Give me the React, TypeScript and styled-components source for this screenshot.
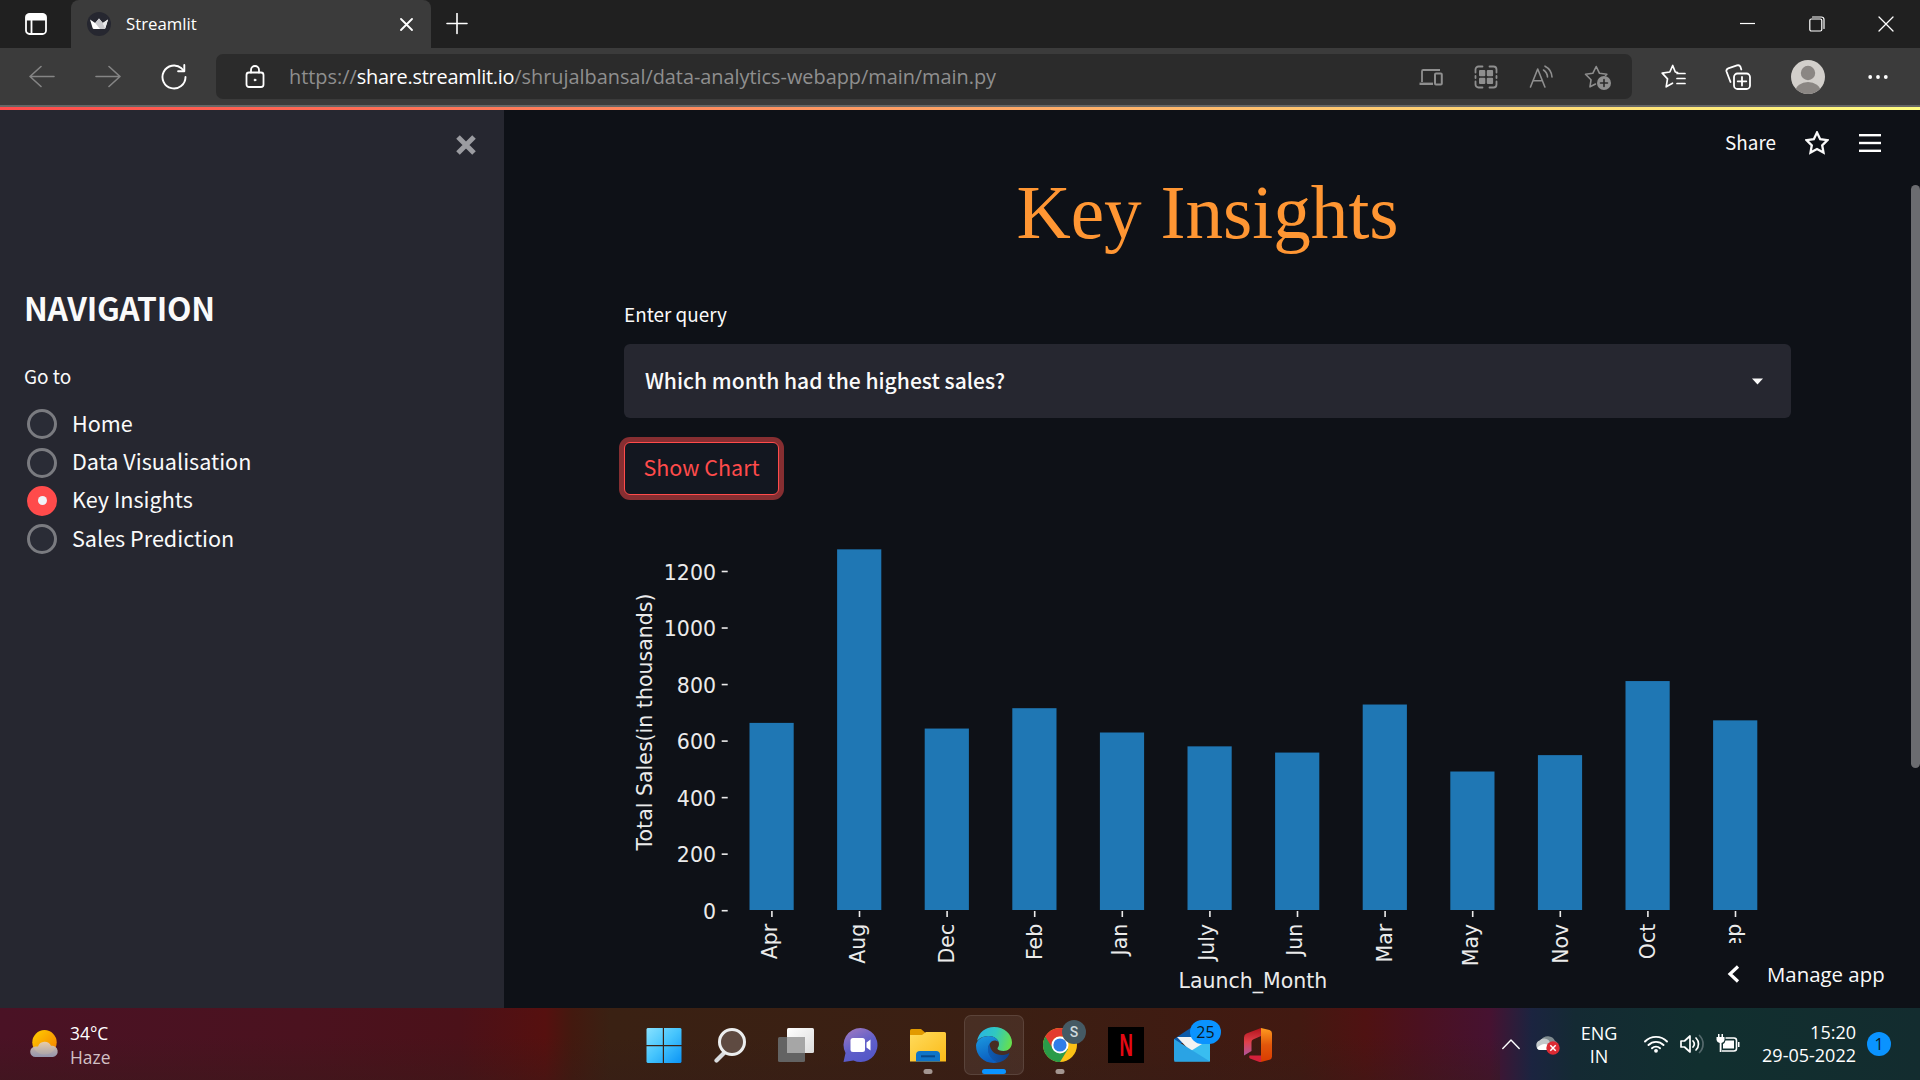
import React from "react";
import styled, { createGlobalStyle } from "styled-components";

const source = `"Noto Sans CJK SC", "Open Sans", sans-serif`;
const segoe = `"Open Sans", "Noto Sans", sans-serif`;

const GlobalStyle = createGlobalStyle`
  * { box-sizing: border-box; }
  html, body { margin: 0; padding: 0; background: #0e1117; overflow: hidden; }
  svg { display: block; flex: none; }
`;

const Screen = styled.div`
  width: 1920px;
  height: 1080px;
  display: flex;
  flex-direction: column;
  overflow: hidden;
  color: #fafafa;
  font-family: ${source};
`;

/* ---------- browser chrome ---------- */

const TabStrip = styled.div`
  height: 48px;
  flex: none;
  display: flex;
  align-items: center;
  padding-right: 26px;
  background: #202020;
  color: #fff;
`;

const TabMenu = styled.div`
  width: 71px;
  padding-left: 25px;
`;

const Tab = styled.div`
  width: 360px;
  height: 48px;
  display: flex;
  align-items: center;
  padding: 0 18px 0 16px;
  background: #3b3b3b;
  border-radius: 8px 8px 0 0;
`;

const Favicon = styled.div`
  width: 24px;
  height: 24px;
  border-radius: 50%;
  background: #262730;
`;

const TabTitle = styled.div`
  flex: 1;
  margin-left: 15px;
  font: 16.8px/24px ${segoe};
  padding-bottom: 1px;
`;

const NewTab = styled.div`
  margin-left: 15px;
`;

const WindowButtons = styled.div`
  margin-left: auto;
  display: flex;
  align-items: center;
  gap: 53px;
`;

const Toolbar = styled.div`
  height: 59px;
  flex: none;
  display: flex;
  align-items: center;
  background: #3b3b3b;
  border-bottom: 2px solid #666;
  padding: 0 32px 0 29px;
`;

const HistoryButtons = styled.div`
  width: 187px;
  display: flex;
  align-items: center;
  gap: 40px;
`;

const AddressBar = styled.div`
  width: 1416px;
  height: 45px;
  display: flex;
  align-items: center;
  padding: 0 21px 0 29px;
  border-radius: 7px;
  background: #2b2b2b;
`;

const Url = styled.div`
  flex: 1;
  margin-left: 24px;
  white-space: nowrap;
  font: 19.9px/28px ${segoe};
  letter-spacing: -0.02px;
  color: #8f8f8f;
`;

const Host = styled.span`
  color: #fff;
  letter-spacing: -0.24px;
`;

const AddressActions = styled.div`
  display: flex;
  align-items: center;
  gap: 31px;
  color: #8f8f8f;
`;

const ToolbarActions = styled.div`
  flex: 1;
  display: flex;
  align-items: center;
  justify-content: space-between;
  padding-left: 29px;
  color: #fff;
`;

const Avatar = styled.div`
  width: 34px;
  height: 34px;
  margin: 0 4px 0 2px;
  border-radius: 50%;
  overflow: hidden;
  background: #d2cfcb;
`;

const Decoration = styled.div`
  height: 3px;
  flex: none;
  background: linear-gradient(90deg, #ff4b4b, #fffd80);
`;

/* ---------- app ---------- */

const Page = styled.div`
  position: relative;
  height: 898px;
  flex: none;
  display: flex;
  background: #0e1117;
  overflow: hidden;
`;

const Sidebar = styled.aside`
  width: 504px;
  flex: none;
  display: flex;
  flex-direction: column;
  padding: 0 27px 0 24px;
  background: #262730;
`;

const SidebarTop = styled.div`
  height: 69px;
  display: flex;
  align-items: center;
  justify-content: flex-end;
`;

const SidebarHeading = styled.h2`
  margin: 108px 0 0;
  font-size: 31.8px;
  font-weight: 700;
  line-height: 40px;
  letter-spacing: -0.2px;
`;

const SidebarLabel = styled.div`
  margin-top: 35px;
  font-size: 19px;
  line-height: 28px;
`;

const RadioGroup = styled.div`
  margin-top: 15px;
  padding-left: 3px;
`;

const RadioRow = styled.label`
  height: 38.4px;
  display: flex;
  align-items: center;
  gap: 15px;
`;

const RadioMark = styled.span<{ $on?: boolean }>`
  width: 30px;
  height: 30px;
  display: grid;
  place-items: center;
  border-radius: 50%;
  border: 3px solid ${(p) => (p.$on ? "#ff4b4b" : "#7a7b80")};
  background: ${(p) => (p.$on ? "#ff4b4b" : "#2a2c36")};

  &::after {
    content: "";
    width: 9px;
    height: 9px;
    border-radius: 50%;
    background: ${(p) => (p.$on ? "#f0f2f6" : "transparent")};
  }
`;

const RadioText = styled.span`
  font-size: 21.6px;
  line-height: 30px;
  padding-bottom: 3px;
`;

const Main = styled.main`
  width: 1416px;
  display: flex;
  flex-direction: column;
`;

const Header = styled.header`
  height: 65px;
  flex: none;
  display: flex;
  align-items: center;
  justify-content: flex-end;
  padding-right: 39px;
`;

const ShareLink = styled.span`
  font-size: 18.9px;
  line-height: 28px;
  padding-bottom: 2px;
  margin-right: 29px;
`;

const HeaderStar = styled.span`
  margin-right: 30px;
`;

const Block = styled.section`
  display: flex;
  flex-direction: column;
  align-items: flex-start;
  padding: 0 129px 0 120px;
`;

const Title = styled.h1`
  align-self: stretch;
  margin: 0;
  text-align: center;
  color: #ff9633;
  font: 400 75.2px/76px "Liberation Serif", serif;
`;

const FieldLabel = styled.div`
  margin-top: 49px;
  font-size: 18.9px;
  line-height: 28px;
`;

const Select = styled.div`
  align-self: stretch;
  height: 74px;
  margin-top: 16px;
  display: flex;
  align-items: center;
  justify-content: space-between;
  padding: 0 28px 0 21px;
  border-radius: 6px;
  background: #262730;
  font-size: 21.1px;
  font-weight: 500;
`;

const SelectText = styled.span`
  line-height: 30px;
  padding-bottom: 3px;
`;

const Button = styled.button`
  width: 155px;
  height: 53px;
  margin: 24px 0 25px;
  padding: 0 0 4px;
  border: 1.5px solid #ff4b4b;
  border-radius: 6px;
  background: #131720;
  box-shadow: 0 0 0 5px #862e31;
  color: #ff4b4b;
  font: 21.5px/30px ${source};
`;

const ManageApp = styled.div`
  position: absolute;
  right: 9px;
  bottom: 0;
  width: 203px;
  height: 65.5px;
  display: flex;
  align-items: center;
  padding: 0 0 2px 19px;
  gap: 27px;
  background: #0e1117;
  font: 20.4px/28px ${segoe};
`;

const Scrollbar = styled.div`
  position: absolute;
  right: 0;
  top: 75px;
  width: 9px;
  height: 583px;
  border-radius: 4.5px;
  background: #6b6c70;
`;

/* ---------- taskbar ---------- */

const Taskbar = styled.div`
  height: 72px;
  flex: none;
  display: grid;
  grid-template-columns: 631px 660px 1fr;
  background:
    linear-gradient(180deg, transparent 40%, rgba(52, 28, 24, 0.35)) 0 0 / 1500px 100% no-repeat,
    linear-gradient(90deg, #4a1225 0, #4b121f 300px, #4b1119 460px, #56100f 545px, #43190f 572px,
      #3a2113 610px, #3b1f13 1000px, #421911 1300px, #4f1212 1365px, #4b1120 1420px,
      #461231 1490px, #1b2440 1532px, #142a33 1575px, #112f2f 1700px, #132c2f 1920px);
  font-family: ${segoe};
  color: #fff;
`;

const Weather = styled.div`
  display: flex;
  align-items: center;
  gap: 11px;
  padding-left: 30px;
`;

const WeatherText = styled.div`
  font-size: 17.4px;
  line-height: 24px;
  padding-top: 2px;
`;

const Muted = styled.div`
  color: #d3c0c5;
`;

const Apps = styled.div`
  display: grid;
  grid-template-columns: repeat(10, 66px);
  padding-top: 2px;
`;

const AppSlot = styled.div`
  position: relative;
  display: grid;
  place-items: center;
`;

const AppTile = styled.div<{ $active?: boolean }>`
  width: 60px;
  height: 60px;
  display: grid;
  place-items: center;
  border-radius: 7px;
  border: 1px solid ${(p) => (p.$active ? "rgba(255,255,255,.1)" : "transparent")};
  background: ${(p) => (p.$active ? "rgba(255,255,255,.07)" : "none")};
`;

const Running = styled.div<{ $wide?: boolean }>`
  position: absolute;
  bottom: 6px;
  left: 50%;
  transform: translateX(-50%);
  width: ${(p) => (p.$wide ? 24 : 9)}px;
  height: 5px;
  border-radius: 3px;
  background: ${(p) => (p.$wide ? "#0a93ff" : "#a39691")};
`;

const ProfileBadge = styled.div`
  position: absolute;
  top: 10px;
  left: 35px;
  width: 24px;
  height: 24px;
  border-radius: 50%;
  background: #455a64;
  color: #cfd8dc;
  text-align: center;
  font: 500 14px/24px Roboto, sans-serif;
`;

const CountBadge = styled.div`
  position: absolute;
  top: 10px;
  left: 31px;
  width: 31px;
  height: 24px;
  border-radius: 12px;
  background: #0a93ff;
  color: #0b1a26;
  text-align: center;
  font: 16px/24px ${segoe};
`;

const NetflixTile = styled.div`
  width: 36px;
  height: 36px;
  background: #000;
  color: #e50914;
  text-align: center;
  font: 700 31px/37px "Liberation Sans", sans-serif;
`;

const NetflixMark = styled.span`
  display: inline-block;
  transform: scaleX(0.6);
`;

const Tray = styled.div`
  display: flex;
  align-items: center;
  justify-content: flex-end;
  padding-right: 29px;
`;

const TrayItem = styled.div<{ $gap: number }>`
  margin-left: ${(p) => p.$gap}px;
`;

const Language = styled.div`
  width: 40px;
  margin-left: 19px;
  padding-top: 2px;
  text-align: center;
  font-size: 18px;
  line-height: 23px;
`;

const Clock = styled.div`
  width: 100px;
  margin: 0 11px 0 15px;
  text-align: right;
  font-size: 18px;
  line-height: 23px;
`;

const Notice = styled.div`
  width: 24px;
  height: 24px;
  border-radius: 50%;
  background: #0a93ff;
  color: #0b1a26;
  text-align: center;
  font-size: 16px;
  line-height: 24px;
`;

/* ---------- data ---------- */

const navigation = ["Home", "Data Visualisation", "Key Insights", "Sales Prediction"];

const months: [string, number][] = [
  ["Apr", 663], ["Aug", 1277], ["Dec", 643], ["Feb", 715], ["Jan", 629], ["July", 580],
  ["Jun", 558], ["Mar", 728], ["May", 491], ["Nov", 549], ["Oct", 811], ["Sep", 672],
];
const ticks = [0, 200, 400, 600, 800, 1000, 1200];

const BASE = 910.3;
const SCALE = 339.2 / 1200;

/* Rotated labels are centred on their ink, so a descender moves the baseline. */
const baselineShift = (name: string) => (/^J/.test(name) ? 26.8 : /[gpy]/.test(name) ? 27.8 : 29.6);

function Chart() {
  return (
    <svg width="1167" height="488" viewBox="624 520 1167 488" fontFamily='"DejaVu Sans", sans-serif' fontSize="20.5" fill="#ebebeb">
      {ticks.map((t) => {
        const y = BASE + 0.4 - t * SCALE;
        return (
          <g key={t}>
            <text x="716" y={y + 8} textAnchor="end">{t}</text>
            <rect x="721.7" y={y - 0.8} width="6" height="1.6" />
          </g>
        );
      })}
      {months.map(([name, value], i) => {
        const x = 749.5 + i * 87.6;
        const top = BASE - value * SCALE;
        return (
          <g key={name}>
            <rect x={x} y={top} width="44.2" height={BASE - 0.3 - top} fill="#1f77b4" />
            <rect x={x + 21.6} y="911" width="1.6" height="6" />
            <text transform={`translate(${x + baselineShift(name)} 923.8) rotate(-90)`} textAnchor="end">{name}</text>
          </g>
        );
      })}
      <text transform="translate(652 722) rotate(-90)" textAnchor="middle" textLength="257">Total Sales(in thousands)</text>
      <text x="1252.9" y="987.5" textAnchor="middle">Launch_Month</text>
    </svg>
  );
}

/* ---------- icons ---------- */

const line = { fill: "none", stroke: "currentColor", strokeWidth: 1.8, strokeLinecap: "round", strokeLinejoin: "round" } as const;

const TabsIcon = () => (
  <svg width="22" height="22" viewBox="0 0 22 22" {...line}>
    <rect x="1" y="1" width="20" height="20" rx="3.5" />
    <path d="M1.5 2.5h19v4h-19z" fill="currentColor" />
    <path d="M6.5 7v13.5" />
  </svg>
);
const Crown = () => (
  <svg width="24" height="24" viewBox="0 0 24 24">
    <path d="M3 7.5 8.2 11 12 6.5 15.8 11 21 7.5 18.3 16.2q-.3.8-1.2.8H6.9q-.9 0-1.2-.8z" fill="#fff" />
    <path d="M12 6.5 8.2 11 13 17h4.1q.9 0 1.2-.8L15.8 11z" fill="#c9c9cd" />
    <path d="M21 7.5 15.8 11l2.5 5.2z" fill="#e8e8ea" />
  </svg>
);
const Cross = ({ size, w = 1.5 }: { size: number; w?: number }) => (
  <svg width={size} height={size} viewBox={`0 0 ${size} ${size}`} {...line} strokeWidth={w}>
    <path d={`M1 1 ${size - 1} ${size - 1}M${size - 1} 1 1 ${size - 1}`} />
  </svg>
);
const Plus = () => (
  <svg width="22" height="22" viewBox="0 0 22 22" {...line} strokeWidth="1.6"><path d="M11 .5v20M1 10.5h20" /></svg>
);
const Minimise = () => (
  <svg width="16" height="16" viewBox="0 0 16 16"><path d="M0 7.5h15" stroke="#fff" strokeWidth="1.2" /></svg>
);
const Restore = () => (
  <svg width="16" height="16" viewBox="0 0 16 16" {...line} strokeWidth="1.2">
    <rect x=".8" y="3" width="12" height="12" rx="1.5" />
    <path d="M3.500 1h9a2.500 2.500 0 0 1 2.500 2.500v9" />
  </svg>
);
const Arrow = ({ flip }: { flip?: boolean }) => (
  <svg width="26" height="24" viewBox="0 0 26 24" {...line} stroke="#858585" strokeWidth="1.6">
    <path d={flip ? "M1 11.500h24M14 1.500l11 10-11 10" : "M25 11.500H1M12 1.500 1 11.500l11 10"} />
  </svg>
);
const Reload = () => (
  <svg width="26" height="26" viewBox="0 0 26 26" {...line} stroke="#fff" strokeWidth="1.900">
    <path d="M24.500 13A11.500 11.500 0 1 1 20.500 4.300L23 6.800" />
    <path d="M23.300 1v6.200h-6.200" />
  </svg>
);
const Lock = () => (
  <svg width="20" height="24" viewBox="0 0 20 24" {...line} stroke="#fff">
    <rect x="1.500" y="7.500" width="17" height="14.500" rx="2.500" />
    <path d="M6 7.500V5a4 4 0 0 1 8 0v2.500" />
    <circle cx="10" cy="15" r=".9" fill="#fff" strokeWidth="1" />
  </svg>
);
const Devices = () => (
  <svg width="24" height="18" viewBox="0 0 24 18" {...line} strokeLinecap="butt">
    <path d="M3 14V3.200Q3 2 4.200 2H21" /><path d="M.5 15.800H14" strokeWidth="2.400" />
    <rect x="16" y="5.500" width="6.800" height="11" rx="1" strokeWidth="2" />
  </svg>
);
const QrIcon = () => (
  <svg width="24" height="24" viewBox="0 0 24 24" {...line}>
    <path d="M1.500 7.500V4.500a3 3 0 0 1 3-3h4M15.500 1.500h4a3 3 0 0 1 3 3v3M22.500 16.500v3a3 3 0 0 1-3 3h-4M8.500 22.500h-4a3 3 0 0 1-3-3v-3M1.500 11v2M22.500 11v2" />
    <g fill="currentColor" stroke="none">
      <rect x="5" y="5" width="6.300" height="6.300" rx="1" /><rect x="12.800" y="5" width="6.300" height="6.300" rx="1" />
      <rect x="5" y="12.800" width="6.300" height="6.300" rx="1" /><rect x="12.800" y="12.800" width="6.300" height="6.300" rx="1" />
    </g>
  </svg>
);
const ReadAloud = () => (
  <svg width="24" height="24" viewBox="0 0 24 24" {...line} strokeWidth="1.6">
    <path d="m1.500 22 7.200-18 7.200 18M4.200 15.800h9" />
    <path d="M14.500 5a9 9 0 0 1 4 7M16 1.200A13 13 0 0 1 23 12" />
  </svg>
);
const starPath = "M12 1.500l3.200 6.700 7.300 1-5.300 5.100 1.300 7.300L12 18.100l-6.500 3.500 1.300-7.300L1.500 9.200l7.300-1z";
const StarAdd = () => (
  <svg width="27" height="26" viewBox="0 0 27 26" {...line} strokeWidth="1.6">
    <path d="M11.500 20 6 22.800 7 15.800 1.500 10.300l7.300-1L12.200 2.500l3.300 6.800 7.300 1-1.300 1.200" />
    <circle cx="20" cy="19" r="7" fill="currentColor" stroke="none" />
    <path d="M20 15.500v7M16.500 19h7" stroke="#2b2b2b" />
  </svg>
);
const Favorites = () => (
  <svg width="25" height="25" viewBox="0 0 25 25" {...line} strokeWidth="1.700">
    <path d="M16.500 8.500 14.300 8 11.700 1.500 8.800 8 1.200 9.200l5.300 5.600-1.300 8 6.300-3.600M16 9.500h8M16 14.500h8M16 19.500h8" />
  </svg>
);
const Collections = () => (
  <svg width="26" height="26" viewBox="0 0 26 26" {...line} strokeWidth="1.800">
    <rect x="9" y="9.500" width="16" height="15.500" rx="3.500" />
    <path d="M17 13v8.500M12.700 17.300h8.600M5.500 18 1.500 7.500Q.9 5.200 3.200 4.300L12 1.400q2.500-.7 3.500 1.500l.8 2.600" />
  </svg>
);
const Person = () => (
  <svg width="34" height="34" viewBox="0 0 34 34"><circle cx="17" cy="13" r="7.200" fill="#8a8683" /><ellipse cx="17" cy="31" rx="12.500" ry="9" fill="#8a8683" /></svg>
);
const Dots = () => (
  <svg width="20" height="6" viewBox="0 0 20 6" fill="#fff"><circle cx="2.200" cy="3" r="1.900" /><circle cx="10" cy="3" r="1.900" /><circle cx="17.800" cy="3" r="1.900" /></svg>
);
const BigStar = () => (
  <svg width="24" height="24" viewBox="0 0 24 24" {...line} strokeWidth="2.300" strokeLinejoin="miter"><path d={starPath} /></svg>
);
const Burger = () => (
  <svg width="22" height="20" viewBox="0 0 22 20" fill="#fff"><rect y="1" width="22" height="2.400" /><rect y="8.800" width="22" height="2.400" /><rect y="16.600" width="22" height="2.400" /></svg>
);
const Caret = () => (
  <svg width="11" height="7" viewBox="0 0 11 7"><path d="M0 .5h11L5.500 6.500z" fill="#fafafa" /></svg>
);
const CloseSidebar = () => (
  <svg width="22" height="22" viewBox="0 0 22 22"><path d="M3 3 19 19M19 3 3 19" stroke="#9b9ca1" strokeWidth="5" /></svg>
);
const ChevronLeft = () => (
  <svg width="13" height="18" viewBox="0 0 13 18"><path d="M11 1.500 3 9l8 7.500" fill="none" stroke="#fff" strokeWidth="3.200" /></svg>
);

const Sun = () => (
  <svg width="29" height="28" viewBox="0 0 29 28">
    <defs>
      <linearGradient id="sun" x1="0" y1="0" x2="1" y2="1"><stop stopColor="#ffcf00" /><stop offset="1" stopColor="#f57c00" /></linearGradient>
      <linearGradient id="haze" x1="0" y1="0" x2="0" y2="1"><stop stopColor="#e6cfb5" /><stop offset="1" stopColor="#9a9fb8" /></linearGradient>
    </defs>
    <circle cx="14.500" cy="12.300" r="12.200" fill="url(#sun)" />
    <path d="M5.500 27a5.300 5.300 0 0 1 0-10.600l2.500.2a7 7 0 0 1 13-.8 5.600 5.600 0 1 1 2 11.200z" fill="url(#haze)" opacity=".93" />
  </svg>
);
const Windows = () => (
  <svg width="37" height="36" viewBox="0 0 37 36">
    <defs><linearGradient id="win" gradientUnits="userSpaceOnUse" x1="0" y1="0" x2="36" y2="36"><stop stopColor="#8be3ff" /><stop offset=".5" stopColor="#45c4fd" /><stop offset="1" stopColor="#0a93f5" /></linearGradient></defs>
    <path d="M1.500 1h15.300v17H.5V2zM18 1h16.500l1 1v16H18zM.5 19.200h16.300V36H1.500l-1-1zM18 19.200h17.500V35l-1 1H18z" fill="url(#win)" />
  </svg>
);
const Search = () => (
  <svg width="34" height="36" viewBox="0 0 34 36">
    <path d="M12 25 3.500 33.500" stroke="#d9dcdf" strokeWidth="4.200" strokeLinecap="round" />
    <circle cx="19" cy="15" r="12.500" fill="#5e4a41" stroke="#eceeef" strokeWidth="3" />
  </svg>
);
const TaskView = () => (
  <svg width="36" height="36" viewBox="0 0 36 36">
    <defs><linearGradient id="tv" x1="0" y1="0" x2="1" y2="1"><stop stopColor="#fff" /><stop offset="1" stopColor="#dcdcdc" /></linearGradient></defs>
    <rect x="9" y="1" width="27" height="25" rx="1.500" fill="url(#tv)" />
    <rect y="10" width="27" height="25" rx="1.500" fill="#636363" />
    <path d="M9 10h18v16H9z" fill="#a6a6a6" />
  </svg>
);
const Chat = () => (
  <svg width="38" height="36" viewBox="1 0 38 36">
    <defs><linearGradient id="chat" x1="0" y1="0" x2=".5" y2="1"><stop stopColor="#a67cc0" /><stop offset=".6" stopColor="#605fc9" /><stop offset="1" stopColor="#5558c8" /></linearGradient></defs>
    <path d="M18.500 1a17 17 0 1 1-7 32.500L1.500 35l2-9A17 17 0 0 1 18.500 1z" fill="url(#chat)" />
    <rect x="8.500" y="11" width="14.500" height="14" rx="2.500" fill="#fff" />
    <path d="M24.500 15.500 28.500 12.500v11l-4-3z" fill="#fff" />
  </svg>
);
const Folder = () => (
  <svg width="36" height="36" viewBox="0 0 36 36">
    <defs><linearGradient id="fold" x1="0" y1="0" x2="1" y2="1"><stop stopColor="#ffdb5c" /><stop offset="1" stopColor="#fbbb18" /></linearGradient></defs>
    <path d="M0 3.500Q0 2 1.500 2H11l4 3.500V10H0z" fill="#e29a00" />
    <path d="M0 8h12l4-3h18.500Q36 5 36 6.500V34.500H0z" fill="url(#fold)" />
    <path d="M6 34.500V28q0-4 4-4h16q4 0 4 4v6.500z" fill="#0f74c8" />
    <path d="M11 29.300h14" stroke="#08488a" strokeWidth="2" />
  </svg>
);
const Edge = () => (
  <svg width="36" height="36" viewBox="0 0 36 36">
    <defs>
      <linearGradient id="e1" x1="0" y1=".3" x2="1" y2=".5"><stop stopColor="#28b4e6" /><stop offset=".5" stopColor="#30c8c0" /><stop offset="1" stopColor="#66e04e" /></linearGradient>
      <linearGradient id="e2" x1="0" y1="0" x2=".3" y2="1"><stop stopColor="#1b9ae0" /><stop offset="1" stopColor="#0b5fc0" /></linearGradient>
      <linearGradient id="e3" x1="0" y1="0" x2="1" y2="0"><stop stopColor="#0e5cb4" /><stop offset="1" stopColor="#0f3f88" /></linearGradient>
    </defs>
    <path d="M1 14C2.500 5.500 9.500 0 18 0c10.500 0 18 7.500 18 15.500 0 5-4 8.500-8.500 8.500-3.500 0-6-1-6-2.500 0-1 1.500-1.800 1.500-4.500C23 12.500 18 9 12.500 9 7 9 3 11.500 1 14z" fill="url(#e1)" />
    <path d="M0 18.500C.5 13 6 9 12.500 9c5.500 0 9 2.800 10 6-2-2-5-2-7-.5C11 18 11 27 17 32l5 3.500C10 38 0 30 0 18.500z" fill="url(#e2)" />
    <path d="M13.500 16.500C9.500 23 13 33 22.500 35.500c5-1 9-4.500 10.800-8.500.3-.8-.3-1-1-.6-8 3.600-18 1-18.800-9.900z" fill="url(#e3)" />
  </svg>
);
const Chrome = () => (
  <svg width="34" height="34" viewBox="0 0 34 34">
    <circle cx="17" cy="17" r="17" fill="#fbc116" />
    <path d="M17 17 2.300 8.500A17 17 0 0 0 17 34l8-13z" fill="#2a9b48" />
    <path d="M2.300 8.500A17 17 0 0 1 31.700 8.500H17a8.500 8.500 0 0 0-8 11z" fill="#e33b2e" />
    <circle cx="17" cy="17" r="8.500" fill="#fff" /><circle cx="17" cy="17" r="6.600" fill="#2f7de9" />
  </svg>
);
const Mail = () => (
  <svg width="36" height="36" viewBox="0 0 36 36">
    <path d="M0 12 18 0l18 12v4H0z" fill="#0c5aa8" />
    <path d="M3 10h30v12L18 26z" fill="#f2f2f2" />
    <path d="M36 12v22.500H0z" fill="#39bdf0" />
    <path d="M0 12v21q0 1.500 1.500 1.500H36z" fill="#2aa3e4" />
  </svg>
);
const Office = () => (
  <svg width="30" height="36" viewBox="0 0 30 36">
    <defs>
      <linearGradient id="of1" x1="0" y1="0" x2="0" y2="1"><stop stopColor="#b3131b" /><stop offset=".5" stopColor="#e0404a" /><stop offset="1" stopColor="#b0559c" /></linearGradient>
      <linearGradient id="of2" x1="0" y1="0" x2="0" y2="1"><stop stopColor="#ff9b1f" /><stop offset=".5" stopColor="#e2560a" /><stop offset="1" stopColor="#d83b01" /></linearGradient>
    </defs>
    <path d="M18 1v8l-8 3.500q-1.500.7-1.500 2.500v9L1 28.500V10.500Q1 7.500 3.500 6.500z" fill="url(#of1)" />
    <path d="M6.500 28.500H18V35h-1.500L7 31.500q-1.500-1-.5-3z" fill="#d5213b" />
    <path d="M18 1l8.500 2Q29 3.800 29 6.500v23q0 2.500-2.500 3.300L18 35z" fill="url(#of2)" />
  </svg>
);

const ChevronUp = () => (
  <svg width="18" height="11" viewBox="0 0 18 11" {...line} strokeWidth="1.400"><path d="M.8 9.500 9 1 17.200 9.500" /></svg>
);
const CloudError = () => (
  <svg width="25" height="22" viewBox="0 0 25 22">
    <path d="M6 7a8 8 0 0 1 14 1q3 1 3 5H8z" fill="#7f8b8f" />
    <path d="M5 17a5 5 0 0 1-.5-9.500 6.500 6.500 0 0 1 9-.5L20 17z" fill="#c3c9cb" />
    <path d="M2 15q6-6 11-3l3 5H5q-2.500 0-3-2z" fill="#fff" />
    <circle cx="18" cy="15" r="6.700" fill="#dc2a33" />
    <path d="m15.300 12.300 5.400 5.400m0-5.400-5.400 5.400" stroke="#fff" strokeWidth="1.500" />
  </svg>
);
const Wifi = () => (
  <svg width="24" height="18" viewBox="0 0 24 18" {...line} strokeWidth="1.900">
    <path d="M1 6.500a15.500 15.500 0 0 1 22 0M4.500 10a10.600 10.600 0 0 1 15 0M8 13.300a5.700 5.700 0 0 1 8 0" />
    <circle cx="12" cy="15.800" r="1.900" fill="currentColor" stroke="none" />
  </svg>
);
const Volume = () => (
  <svg width="26" height="20" viewBox="0 0 26 20" {...line} strokeWidth="1.700">
    <path d="M2 7h3.500L11 2v16l-5.500-5H2zM14 7a4.500 4.500 0 0 1 0 6M17 4a8.500 8.500 0 0 1 0 12" />
    <path d="M20.500 1.500a12 12 0 0 1 0 17" stroke="#55696c" />
  </svg>
);
const Battery = () => (
  <svg width="26" height="20" viewBox="0 0 26 20">
    <path d="M10.500 4H19q2.500 0 2.500 2.500v8Q21.500 17 19 17H7" fill="none" stroke="#fff" strokeWidth="1.600" />
    <path d="M10.500 6.500H19v8H8V10q2-1 2.500-3.500z" fill="#fff" />
    <path d="M23 8h1.500v5H23zM3 0h1.500v3h2V0H8v3h1.500v3Q9 8.500 6.500 9v9H4.700V9Q2 8.500 1.500 6V3H3z" fill="#fff" />
  </svg>
);

export default function App() {
  return (
    <Screen>
      <GlobalStyle />
      <TabStrip>
        <TabMenu><TabsIcon /></TabMenu>
        <Tab>
          <Favicon><Crown /></Favicon>
          <TabTitle>Streamlit</TabTitle>
          <Cross size={13} w={1.8} />
        </Tab>
        <NewTab><Plus /></NewTab>
        <WindowButtons><Minimise /><Restore /><Cross size={16} w={1.3} /></WindowButtons>
      </TabStrip>
      <Toolbar>
        <HistoryButtons><Arrow /><Arrow flip /><Reload /></HistoryButtons>
        <AddressBar>
          <Lock />
          <Url>https://<Host>share.streamlit.io</Host>/shrujalbansal/data-analytics-webapp/main/main.py</Url>
          <AddressActions><Devices /><QrIcon /><ReadAloud /><StarAdd /></AddressActions>
        </AddressBar>
        <ToolbarActions>
          <Favorites />
          <Collections />
          <Avatar><Person /></Avatar>
          <Dots />
        </ToolbarActions>
      </Toolbar>
      <Decoration />

      <Page>
        <Sidebar>
          <SidebarTop><CloseSidebar /></SidebarTop>
          <SidebarHeading>NAVIGATION</SidebarHeading>
          <SidebarLabel>Go to</SidebarLabel>
          <RadioGroup>
            {navigation.map((name) => (
              <RadioRow key={name}>
                <RadioMark $on={name === "Key Insights"} />
                <RadioText>{name}</RadioText>
              </RadioRow>
            ))}
          </RadioGroup>
        </Sidebar>
        <Main>
          <Header>
            <ShareLink>Share</ShareLink>
            <HeaderStar><BigStar /></HeaderStar>
            <Burger />
          </Header>
          <Block>
            <Title>Key Insights</Title>
            <FieldLabel>Enter query</FieldLabel>
            <Select>
              <SelectText>Which month had the highest sales?</SelectText>
              <Caret />
            </Select>
            <Button>Show Chart</Button>
            <Chart />
          </Block>
        </Main>
        <ManageApp><ChevronLeft />Manage app</ManageApp>
        <Scrollbar />
      </Page>

      <Taskbar>
        <Weather>
          <Sun />
          <WeatherText>34°C<Muted>Haze</Muted></WeatherText>
        </Weather>
        <Apps>
          <AppSlot><Windows /></AppSlot>
          <AppSlot><Search /></AppSlot>
          <AppSlot><TaskView /></AppSlot>
          <AppSlot><Chat /></AppSlot>
          <AppSlot><Folder /><Running /></AppSlot>
          <AppSlot><AppTile $active><Edge /></AppTile><Running $wide /></AppSlot>
          <AppSlot><Chrome /><ProfileBadge>S</ProfileBadge><Running /></AppSlot>
          <AppSlot><NetflixTile><NetflixMark>N</NetflixMark></NetflixTile></AppSlot>
          <AppSlot><Mail /><CountBadge>25</CountBadge></AppSlot>
          <AppSlot><Office /></AppSlot>
        </Apps>
        <Tray>
          <TrayItem $gap={0}><ChevronUp /></TrayItem>
          <TrayItem $gap={15}><CloudError /></TrayItem>
          <Language>ENG<br />IN</Language>
          <TrayItem $gap={25}><Wifi /></TrayItem>
          <TrayItem $gap={11}><Volume /></TrayItem>
          <TrayItem $gap={10}><Battery /></TrayItem>
          <Clock>15:20<br />29-05-2022</Clock>
          <Notice>1</Notice>
        </Tray>
      </Taskbar>
    </Screen>
  );
}
